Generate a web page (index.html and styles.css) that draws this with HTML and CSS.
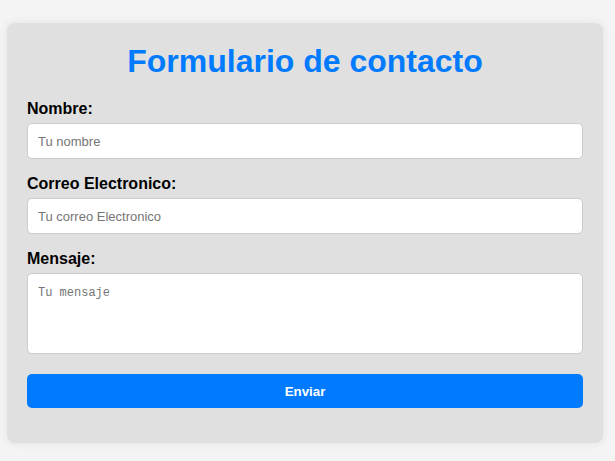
FILE: index.html
```html
<!DOCTYPE html>
<html lang="es">
<head>
<meta charset="utf-8">
<title>Formulario de contacto</title>
<link rel="stylesheet" href="styles.css">
</head>
<body>
  <div class="card">
    <h2 class="title">Formulario de contacto</h2>
    <form class="form">
      <div class="group">
        <label class="label" for="nombre">Nombre:</label>
        <input class="field" id="nombre" type="text" placeholder="Tu nombre">
      </div>
      <div class="group">
        <label class="label" for="correo">Correo Electronico:</label>
        <input class="field" id="correo" type="email" placeholder="Tu correo Electronico">
      </div>
      <div class="group">
        <label class="label" for="mensaje">Mensaje:</label>
        <textarea class="field area" id="mensaje" placeholder="Tu mensaje"></textarea>
      </div>
      <button class="btn" type="submit">Enviar</button>
    </form>
  </div>
</body>
</html>
```

FILE: styles.css
```css
html, body {
  margin: 0;
  padding: 0;
}
body {
  background: #f4f4f4;
  font-family: "Liberation Sans", Arial, sans-serif;
  padding: 23px 0 0 7px;
  height: 461px;
  box-sizing: border-box;
}
.card {
  width: 596px;
  box-sizing: border-box;
  background: #e0e0e0;
  border-radius: 8px;
  padding: 20px 20px 35px;
  box-shadow: 0 0 10px rgba(0, 0, 0, 0.08);
}
.title {
  margin: 0 0 18px;
  font-size: 32px;
  line-height: 37px;
  font-weight: bold;
  color: #007bff;
  text-align: center;
}
.form {
  margin: 0;
  display: flex;
  flex-direction: column;
}
.group {
  display: flex;
  flex-direction: column;
  margin-bottom: 14px;
}
.label {
  font-size: 16px;
  line-height: 18px;
  font-weight: bold;
  color: #000;
  padding-top: 2px;
  margin-bottom: 5px;
}
.field {
  box-sizing: border-box;
  width: 100%;
  height: 36px;
  padding: 0 10px;
  border: 1px solid #ccc;
  border-radius: 5px;
  background: #fff;
  font-family: "Liberation Sans", Arial, sans-serif;
  font-size: 13px;
  color: #000;
  outline: none;
}
.field::placeholder {
  color: #757575;
}
.area {
  height: 81px;
  padding: 12px 10px;
  font-family: "Liberation Mono", "DejaVu Sans Mono", monospace;
  font-size: 12px;
  line-height: 14px;
  resize: none;
}
.group:has(.area) {
  margin-bottom: 20px;
}
.btn {
  height: 34px;
  border: none;
  border-radius: 5px;
  background: #007bff;
  color: #fff;
  font-family: "Liberation Sans", Arial, sans-serif;
  font-size: 13.33px;
  font-weight: bold;
  cursor: pointer;
}
```
